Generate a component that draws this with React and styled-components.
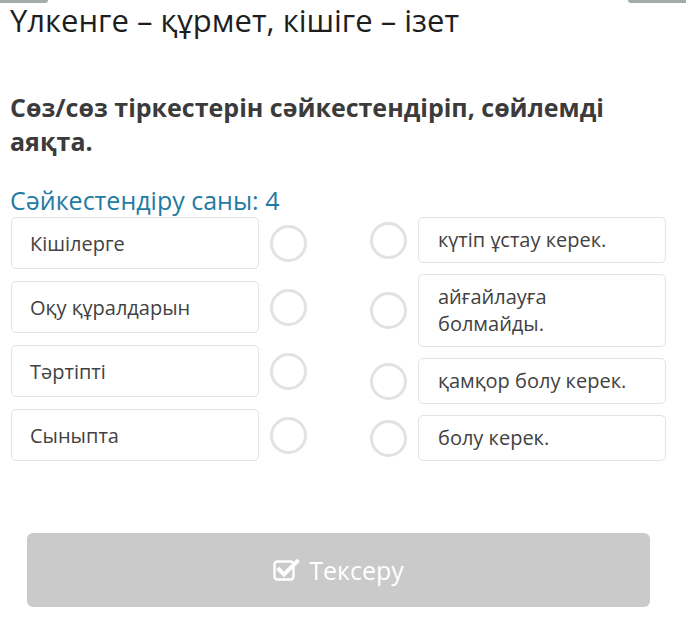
import React from "react";
import styled, { createGlobalStyle } from "styled-components";

const GlobalStyle = createGlobalStyle`
  html, body { margin: 0; padding: 0; background: #fff; }
  body { font-family: "Open Sans", "Noto Sans", sans-serif; }
  * { box-sizing: border-box; }
`;

const Page = styled.div`
  width: 686px;
  height: 629px;
  overflow: hidden;
  padding: 0 20px 0 11px;
  display: flex;
  flex-direction: column;
`;

const TopBar = styled.div`
  height: 3px;
  margin: 0 -20px 0 -11px;
  display: flex;
  justify-content: space-between;
`;

const Tab = styled.div`
  width: ${(p) => p.$w}px;
  height: 3px;
  background: #a3acac;
  border-radius: ${(p) => (p.$right ? "0 0 0 3px" : "0 0 3px 0")};
`;

const Title = styled.h1`
  margin: 0 0 0 -1px;
  font-size: 31px;
  line-height: 34px;
  font-weight: 400;
  color: #1e1e1e;
`;

const Question = styled.h2`
  margin: 53px 0 0 -1px;
  font-size: 25px;
  line-height: 34px;
  font-weight: 700;
  color: #3b3b3b;
`;

const Counter = styled.div`
  margin: 25px 0 0 -1px;
  font-size: 25px;
  line-height: 34px;
  color: #1f7ba2;
`;

const Columns = styled.div`
  display: grid;
  grid-template-columns: 296px 296px;
  column-gap: 63px;
`;

const Column = styled.div`
  display: flex;
  flex-direction: column;
  gap: ${(p) => p.$gap}px;
`;

const Row = styled.div`
  display: flex;
  align-items: center;
  gap: 11px;
`;

const Card = styled.div`
  flex: 1;
  border: 1px solid #e3e3e3;
  border-radius: 5px;
  background: #fff;
  color: #424242;
  font-size: 20px;
  line-height: 27px;
  display: flex;
  align-items: center;
  ${(p) =>
    p.$left
      ? `height: 52px; padding: 0 18px;`
      : `min-height: 46px; padding: 8px 19px 9px 19px;`}
`;

const Circle = styled.div`
  flex: none;
  width: 37px;
  height: 37px;
  border-radius: 50%;
  border: 3px solid #e1e3e3;
  background: #fff;
`;

const Button = styled.button`
  margin: 72px 16px 0;
  height: 74px;
  border: none;
  border-radius: 6px;
  background: #cacaca;
  color: #fff;
  font-family: "Open Sans", "Noto Sans", sans-serif;
  font-size: 25px;
  display: flex;
  align-items: center;
  justify-content: center;
  gap: 9px;
  padding: 0;
`;

const CheckIcon = () => (
  <svg width="27" height="22" viewBox="0 0 27 22" fill="none">
    <rect x="1.5" y="2.5" width="19" height="18" rx="3" stroke="#fff" strokeWidth="2.4" />
    <path d="M6 10.5 L11 15.5 L24 2.5" stroke="#fff" strokeWidth="4" strokeLinecap="square" />
  </svg>
);

const left = ["Кішілерге", "Оқу құралдарын", "Тәртіпті", "Сыныпта"];
const right = ["күтіп ұстау керек.", "айғайлауға болмайды.", "қамқор болу керек.", "болу керек."];

export default function App() {
  return (
    <>
      <GlobalStyle />
      <Page>
        <TopBar>
          <Tab $w={48} />
          <Tab $w={58} $right />
        </TopBar>
        <Title>Үлкенге – құрмет, кішіге – ізет</Title>
        <Question>Сөз/сөз тіркестерін сәйкестендіріп, сөйлемді аяқта.</Question>
        <Counter>Сәйкестендіру саны: 4</Counter>
        <Columns>
          <Column $gap={12}>
            {left.map((t) => (
              <Row key={t}>
                <Card $left>{t}</Card>
                <Circle />
              </Row>
            ))}
          </Column>
          <Column $gap={11}>
            {right.map((t) => (
              <Row key={t}>
                <Circle />
                <Card>{t === "айғайлауға болмайды." ? (<span>айғайлауға<br />болмайды.</span>) : t}</Card>
              </Row>
            ))}
          </Column>
        </Columns>
        <Button>
          <CheckIcon />
          Тексеру
        </Button>
      </Page>
    </>
  );
}
